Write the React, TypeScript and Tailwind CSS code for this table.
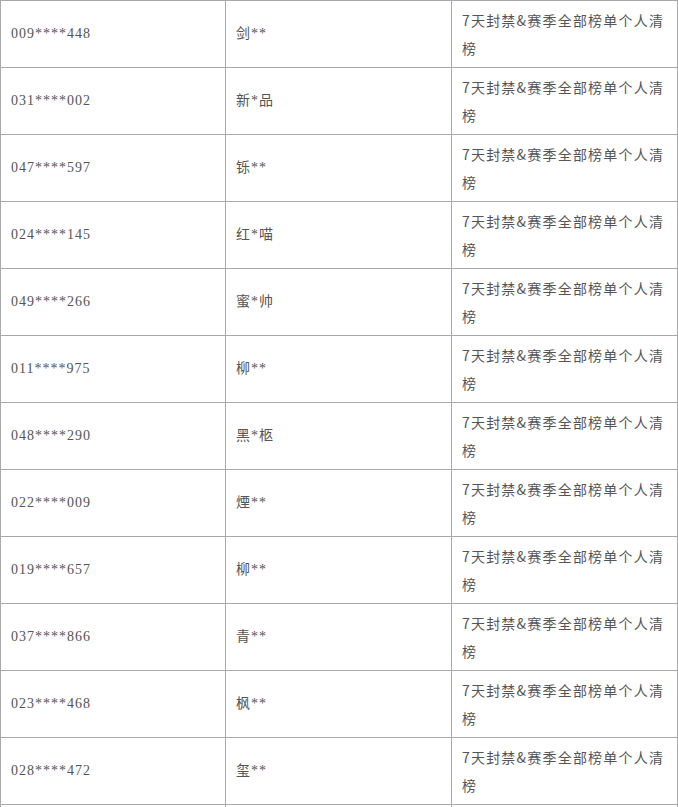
const rows: [string, string][] = [
  ['009****448', '剑**'],
  ['031****002', '新*品'],
  ['047****597', '铄**'],
  ['024****145', '红*喵'],
  ['049****266', '蜜*帅'],
  ['011****975', '柳**'],
  ['048****290', '黑*柩'],
  ['022****009', '煙**'],
  ['019****657', '柳**'],
  ['037****866', '青**'],
  ['023****468', '枫**'],
  ['028****472', '玺**'],
]

const reason = '7天封禁&赛季全部榜单个人清榜'

const cell = 'border border-[#aaa] px-[10px] py-[5px] align-middle'

export default function App() {
  return (
    <div className="bg-white min-h-screen">
      <table className="table-fixed border-collapse w-[677px] text-[14px] leading-[28px] tracking-[1px] text-[#555]">
        <colgroup>
          <col className="w-[225px]" />
          <col className="w-[226px]" />
          <col className="w-[226px]" />
        </colgroup>
        <tbody>
          {rows.map(([id, name]) => (
            <tr key={id}>
              <td className={`${cell} font-['Liberation_Serif','Noto_Sans_CJK_SC',serif]`}>{id}</td>
              <td className={`${cell} font-['Liberation_Serif','Noto_Sans_CJK_SC',serif]`}>{name}</td>
              <td className={`${cell} font-['Noto_Sans_CJK_SC',sans-serif] tracking-[1.2px]`}>{reason}</td>
            </tr>
          ))}
          {/* 画面外に続く行 (下端で切れている) */}
          <tr>
            <td className={`${cell} h-[67px]`} />
            <td className={`${cell} h-[67px]`} />
            <td className={`${cell} h-[67px]`} />
          </tr>
        </tbody>
      </table>
    </div>
  )
}
